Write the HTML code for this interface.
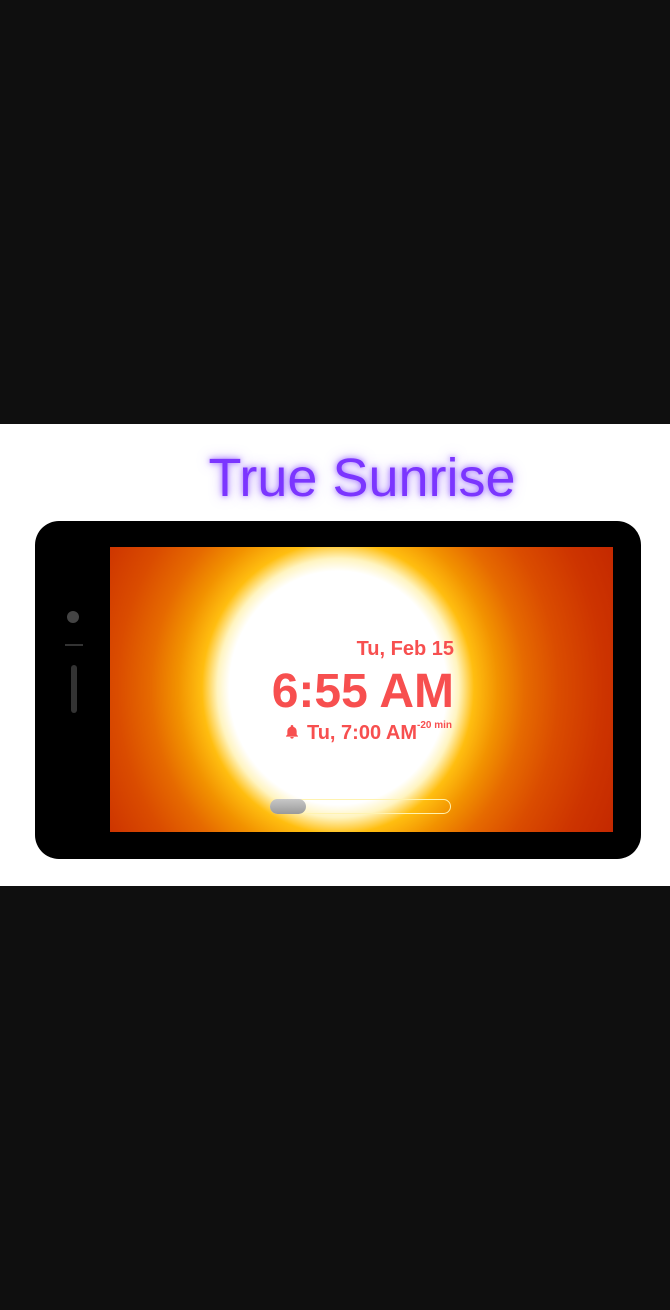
<!DOCTYPE html>
<html><head><meta charset="utf-8"><style>
html,body{margin:0;padding:0;width:670px;height:1310px;background:#0f0f0f;overflow:hidden;font-family:"Liberation Sans",sans-serif}
.band{position:absolute;left:0;top:424px;width:670px;height:462px;background:#fff}
.title{position:absolute;left:0;width:670px;top:443px;padding-left:54px;box-sizing:border-box;text-align:center;font-size:54px;color:#7b35ff;text-shadow:0 0 6px rgba(140,80,255,.8),0 0 12px rgba(140,80,255,.5);line-height:70px}
.phone{position:absolute;left:35px;top:521px;width:606px;height:338px;background:#000;border-radius:24px}
.screen{position:absolute;left:110px;top:547px;width:503px;height:285px;overflow:hidden;
background:radial-gradient(ellipse 340px 365px at 228px 141px,#fff 0%,#fff 32%,#fff4c0 35.5%,#ffbe10 40%,#f29200 47%,#e66a00 55%,#da4c00 65%,#cd3400 78%,#c22600 92%,#bb2200 100%)}
.t{position:absolute;right:159px;color:#f74f4f;font-weight:bold;text-align:right;white-space:nowrap}
.cam{position:absolute;left:67px;top:611px;width:12px;height:12px;border-radius:50%;background:#444}
.ln{position:absolute;left:65px;top:644px;width:18px;height:2px;background:#333}
.slot{position:absolute;left:71px;top:665px;width:6px;height:48px;border-radius:3px;background:#333}
.pill{position:absolute;left:160px;top:252px;width:179px;height:13px;border:1px solid #fff3b0;border-radius:8px}
.knob{position:absolute;left:160px;top:252px;width:36px;height:15px;border-radius:8px;background:linear-gradient(#c8c8c8,#999)}
</style></head><body>
<div class="band"></div>
<div class="title">True Sunrise</div>
<div class="phone"></div>
<div class="cam"></div><div class="ln"></div><div class="slot"></div>
<div class="screen">
<div class="t" style="top:91px;font-size:20px;right:159px">Tu, Feb 15</div>
<div class="t" style="top:118px;font-size:48px;line-height:54px;right:159px">6:55 AM</div>
<div class="t" style="top:175px;font-size:20px;right:161px">
<svg width="16" height="16" viewBox="0 0 24 24" style="vertical-align:-1px;margin-right:7px"><path fill="#f74f4f" d="M12 22a2.5 2.5 0 0 0 2.5-2.5h-5A2.5 2.5 0 0 0 12 22zm7-6V11c0-3.3-2-5.9-5-6.6V3.5a2 2 0 0 0-4 0v.9C7 5.1 5 7.7 5 11v5l-2 2v1h18v-1z"/></svg>Tu, 7:00 AM<sup style="font-size:10px;position:relative;top:-3px">-20 min</sup></div>
<div class="pill"></div><div class="knob"></div>
</div>
</body></html>
